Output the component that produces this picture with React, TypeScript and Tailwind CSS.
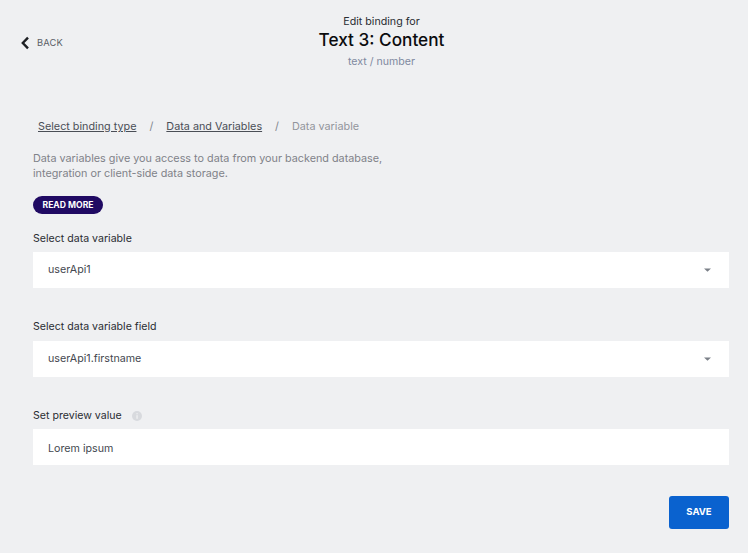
const font = { fontFamily: '"Inter", "Liberation Sans", sans-serif' };

function Caret() {
  return (
    <svg width="7" height="4" viewBox="0 0 7 4" className="mb-[1px] shrink-0">
      <path d="M0 0.5H7L3.5 3.8Z" fill="#7b8088" />
    </svg>
  );
}

function Field({ label, value, select, info, className, boxClass }: { label: string; value: string; select?: boolean; info?: boolean; className?: string; boxClass?: string }) {
  return (
    <div className={className}>
      <div className="flex items-center h-4 text-[10.6px] leading-4 text-[#2a2d32]">
        <span>{label}</span>
        {info && (
          <svg width="10" height="10" viewBox="0 0 10 10" className="ml-[10px]">
            <circle cx="5" cy="5" r="5" fill="#d8dade" />
            <rect x="4.5" y="4.2" width="1.1" height="3.6" fill="#f4f5f6" />
            <rect x="4.5" y="2.2" width="1.1" height="1.1" fill="#f4f5f6" />
          </svg>
        )}
      </div>
      <div className={`flex h-9 items-center justify-between bg-white pl-[15px] pr-[18px] text-[10.7px] text-[#44484f] ${boxClass}`}>
        <span>{value}</span>
        {select && <Caret />}
      </div>
    </div>
  );
}

export default function App() {
  return (
    <div className="h-[553px] w-[748px] overflow-hidden bg-[#eff0f2]" style={font}>
      <header className="grid grid-cols-[1fr_auto_1fr] items-center pl-5 pr-[5px] pt-[14px]">
        <div className="flex items-center gap-[7px] pt-[2px] text-[9.3px] tracking-[0.2px] text-[#5a5e66]">
          <svg width="10" height="14" viewBox="0 0 10 14" fill="none">
            <path d="M8 1.6 2.8 7 8 12.4" stroke="#1d1f23" strokeWidth="2.4" />
          </svg>
          <span>BACK</span>
        </div>
        <div className="flex flex-col items-center">
          <div className="text-[10.7px] leading-[15px] text-[#2a2d32]">Edit binding for</div>
          <div className="text-[17.2px] font-medium leading-[22px] text-[#0b0c0e]">Text 3: Content</div>
          <div className="mt-[3px] text-[10.6px] leading-[15px] text-[#8089a0]">text / number</div>
        </div>
        <div />
      </header>

      <main className="pl-[33px] pr-[19px] pt-[50px]">
        <nav className="flex items-center pl-[5px] text-[10.8px] leading-4 text-[#4a4e56]">
          <span className="underline">Select binding type</span>
          <span className="mx-[13px] text-[#80848c]">/</span>
          <span className="underline">Data and Variables</span>
          <span className="mx-[13px] text-[#80848c]">/</span>
          <span className="text-[#92959c]">Data variable</span>
        </nav>
        <p className="mt-[16px] w-[370px] text-[10.8px] leading-[15px] text-[#7f8289]">
          Data variables give you access to data from your backend database, integration or client-side data storage.
        </p>
        <button className="mt-[15px] flex h-[18px] w-[70px] items-center justify-center rounded-full bg-[#200a63] text-[8.6px] font-bold text-white">
          READ MORE
        </button>
        <Field className="mt-[17px]" boxClass="mt-[5px]" label="Select data variable" value="userApi1" select />
        <Field className="mt-[31px]" boxClass="mt-[6px]" label="Select data variable field" value="userApi1.firstname" select />
        <Field className="mt-[31px]" boxClass="mt-[5px] pt-[4px]" label="Set preview value" value="Lorem ipsum" info />
        <div className="mt-[31px] flex justify-end">
          <button className="h-[33px] w-[60px] rounded-[3px] bg-[#0a62cf] text-[9.5px] font-bold text-white">SAVE</button>
        </div>
      </main>
    </div>
  );
}
